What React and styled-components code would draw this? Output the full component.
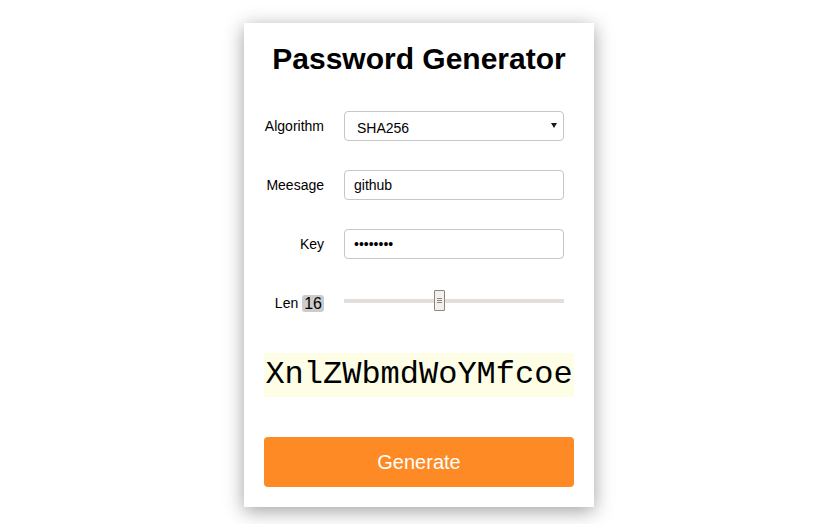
import React, { useState } from "react";
import styled, { createGlobalStyle } from "styled-components";

const Global = createGlobalStyle`
  html, body { margin: 0; padding: 0; background: #fff; }
  body { font-family: "Liberation Sans", Arial, sans-serif; color: #000; }
`;

const Page = styled.div`
  display: flex;
  justify-content: center;
  padding: 23px 0 17px 14px;
`;

const Card = styled.div`
  width: 350px;
  box-sizing: border-box;
  padding: 20px;
  background: #fff;
  box-shadow: 0 4px 18px rgba(0, 0, 0, 0.38);
  display: flex;
  flex-direction: column;
`;

const Title = styled.h1`
  margin: 0;
  font-size: 30px;
  line-height: 32px;
  font-weight: bold;
  text-align: center;
`;

const Form = styled.div`
  margin-top: 36px;
  width: 300px;
  display: flex;
  flex-direction: column;
  gap: 29px;
`;

const Row = styled.div`
  display: grid;
  grid-template-columns: 60px 220px;
  column-gap: 20px;
  align-items: center;
  height: 30px;
`;

const Label = styled.label`
  font-size: 14px;
  text-align: right;
  white-space: nowrap;
  display: flex;
  justify-content: flex-end;
  align-items: center;
  gap: 4px;
`;

const Badge = styled.span`
  background: #cccccc;
  border-radius: 3px;
  font-size: 16px;
  line-height: 17px;
  padding: 0 2px;
`;

const SelectWrap = styled.div`
  position: relative;
  height: 30px;
`;

const Select = styled.select`
  appearance: none;
  width: 100%;
  height: 30px;
  box-sizing: border-box;
  border: 1px solid #c6c6c6;
  border-radius: 4px;
  background: #fff;
  font-family: "Liberation Sans", Arial, sans-serif;
  font-size: 14px;
  padding: 3px 0 0 12px;
  color: #000;
  outline: none;
`;

const Arrow = styled.span`
  position: absolute;
  right: 7px;
  top: 12px;
  width: 0;
  height: 0;
  border-left: 3.5px solid transparent;
  border-right: 3.5px solid transparent;
  border-top: 5px solid #1a1a1a;
  pointer-events: none;
`;

const Input = styled.input`
  width: 100%;
  height: 30px;
  box-sizing: border-box;
  border: 1px solid #c6c6c6;
  border-radius: 4px;
  background: #fff;
  font-family: "Liberation Sans", Arial, sans-serif;
  font-size: 14px;
  padding: 0 9px;
  color: #000;
  outline: none;
`;

const Slider = styled.div`
  position: relative;
  height: 21px;
  display: flex;
  align-items: center;
  margin-top: -5px;
`;

const Track = styled.div`
  width: 100%;
  height: 4px;
  background: #e3dfdb;
`;

const Thumb = styled.div`
  position: absolute;
  top: 0;
  width: 11px;
  height: 21px;
  box-sizing: border-box;
  border: 1px solid #8e847c;
  border-radius: 1px;
  background: #f3f0ed;
  display: flex;
  flex-direction: column;
  align-items: center;
  justify-content: center;
  gap: 1px;
`;

const Grip = styled.span`
  display: block;
  width: 5px;
  height: 1px;
  background: #8e847c;
`;

const Output = styled.div`
  margin-top: 35px;
  height: 44px;
  background: #fefee6;
  font-family: "Liberation Mono", "Courier New", monospace;
  font-size: 32px;
  line-height: 44px;
  text-align: center;
  white-space: nowrap;
`;

const Button = styled.button`
  margin-top: 40px;
  height: 50px;
  border: none;
  border-radius: 4px;
  background: #fe8a25;
  color: #fff;
  font-family: "Liberation Sans", Arial, sans-serif;
  font-size: 20px;
  cursor: pointer;
`;

export default function App() {
  const [len] = useState(16);
  const min = 4;
  const max = 32;
  const pct = (len - min) / (max - min);
  return (
    <>
      <Global />
      <Page>
        <Card>
          <Title>Password Generator</Title>
          <Form>
            <Row>
              <Label>Algorithm</Label>
              <SelectWrap>
                <Select defaultValue="SHA256">
                  <option>MD5</option>
                  <option>SHA1</option>
                  <option>SHA256</option>
                  <option>SHA512</option>
                </Select>
                <Arrow />
              </SelectWrap>
            </Row>
            <Row>
              <Label>Meesage</Label>
              <Input type="text" defaultValue="github" />
            </Row>
            <Row>
              <Label>Key</Label>
              <Input type="password" defaultValue="12345678" />
            </Row>
            <Row>
              <Label>
                Len <Badge>{len}</Badge>
              </Label>
              <Slider>
                <Track />
                <Thumb style={{ left: `${pct * (220 - 11)}px` }}>
                  <Grip />
                  <Grip />
                  <Grip />
                </Thumb>
              </Slider>
            </Row>
          </Form>
          <Output>XnlZWbmdWoYMfcoe</Output>
          <Button>Generate</Button>
        </Card>
      </Page>
    </>
  );
}
